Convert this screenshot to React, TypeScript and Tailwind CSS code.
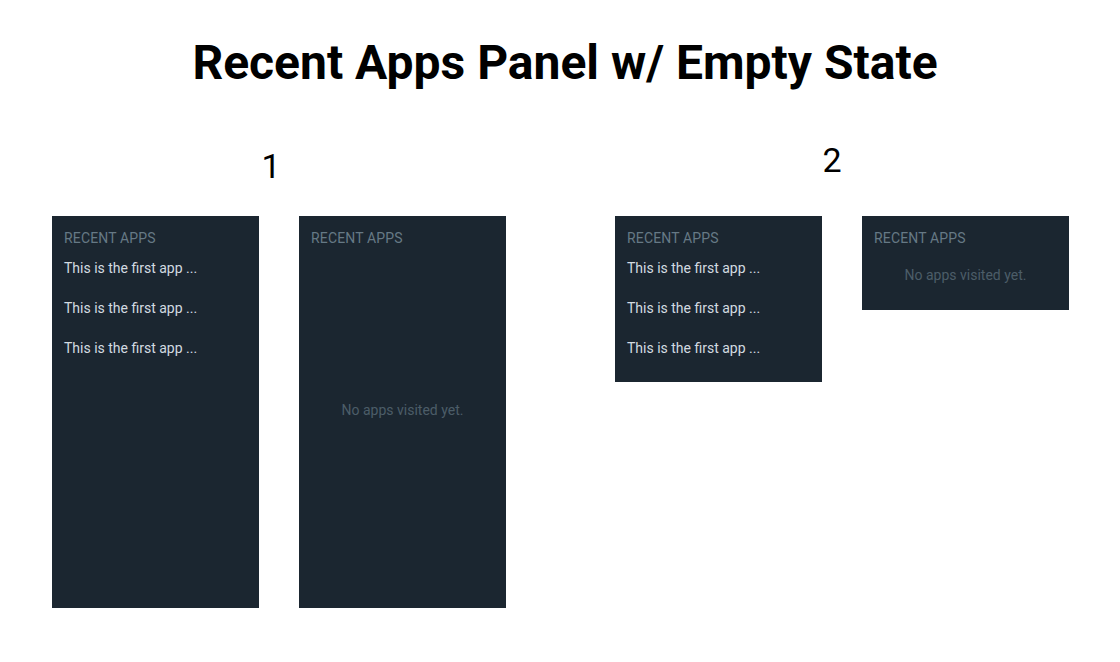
const items = ['This is the first app ...', 'This is the first app ...', 'This is the first app ...'];

type PanelProps = {
  apps: string[],
  tall?: boolean
}

const Panel = ({apps, tall}: PanelProps) => {
  return (
    <div className={`w-[207px] bg-[#1b2630] px-3 pt-3 flex flex-col ${tall ? 'h-[392px]' : ''} ${apps.length && !tall ? 'pb-[14px]' : ''}`}>
      <p className="text-[14px] leading-5 tracking-[0.15px] text-[#667985] uppercase">Recent Apps</p>
      {apps.length > 0 ? (
        apps.map((a, i) => (
          <p key={i} className="text-[14px] leading-5 py-[10px] text-[#d3dbe0]">{a}</p>
        ))
      ) : (
        <div className={`flex justify-center ${tall ? 'flex-1 items-center pb-[36px]' : 'pt-[17px] pb-[25px]'}`}>
          <p className="text-[14px] leading-5 text-[#4c5d68]">No apps visited yet.</p>
        </div>
      )}
    </div>
  );
};

export default function App() {
  return (
    <div className="w-[1120px] h-[662px] bg-white font-['Roboto',sans-serif] text-black">
      <h1 className="text-center text-[48px] font-bold leading-none pt-[39px] pl-[10px]">Recent Apps Panel w/ Empty State</h1>
      <div className="flex gap-[109px] pl-[52px] pt-[55px]">
        <div>
          <div className="w-[438px] text-center text-[34px] leading-none pt-[7px] h-[74px]">1</div>
          <div className="flex gap-[40px] items-start">
            <Panel apps={items} tall />
            <Panel apps={[]} tall />
          </div>
        </div>
        <div>
          <div className="w-[434px] text-center text-[34px] leading-none pt-[1px] h-[74px]">2</div>
          <div className="flex gap-[40px] items-start">
            <Panel apps={items} />
            <Panel apps={[]} />
          </div>
        </div>
      </div>
    </div>
  );
}
